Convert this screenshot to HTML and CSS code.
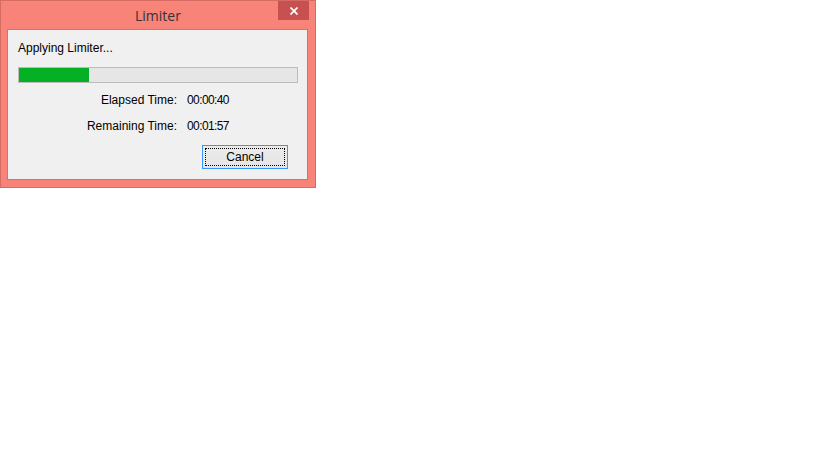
FILE: index.html
```html
<!DOCTYPE html>
<html>
<head>
<meta charset="utf-8">
<link rel="stylesheet" href="styles.css">
</head>
<body>
<div class="window">
  <div class="titlebar">
    <div class="title">Limiter</div>
    <div class="close">
      <svg width="8" height="8" viewBox="0 0 8 8"><path d="M0.5 0.5 L7.5 7.5 M7.5 0.5 L0.5 7.5" stroke="#fff" stroke-width="1.7" fill="none"/></svg>
    </div>
  </div>
  <div class="client">
    <div class="status">Applying Limiter...</div>
    <div class="progress"><div class="fill" style="width:70px"></div></div>
    <div class="times">
      <div class="label">Elapsed Time:</div><div class="value">00:00:40</div>
      <div class="label">Remaining Time:</div><div class="value">00:01:57</div>
    </div>
    <div class="actions">
      <div class="button"><span class="focus">Cancel</span></div>
    </div>
  </div>
</div>
</body>
</html>
```
FILE: styles.css
```css
html, body {
  margin: 0;
  padding: 0;
  background: #ffffff;
}
.window {
  width: 316px;
  height: 188px;
  box-sizing: border-box;
  border: 1px solid #d56b62;
  background: #f88379;
  display: flex;
  flex-direction: column;
}
.titlebar {
  height: 28px;
  display: grid;
  grid-template-columns: 1fr;
}
.title {
  grid-area: 1 / 1;
  justify-self: center;
  align-self: start;
  font-family: "Open Sans", sans-serif;
  font-size: 14px;
  line-height: 20px;
  margin-top: 5px;
  color: #333333;
}
.close {
  grid-area: 1 / 1;
  justify-self: end;
  align-self: start;
  width: 31px;
  height: 19px;
  margin-right: 6px;
  background: #c75050;
  display: flex;
  align-items: center;
  justify-content: center;
}
.close svg { display: block; margin-top: 1px; }
.client {
  margin-left: 6px;
  width: 301px;
  height: 151px;
  box-sizing: border-box;
  border: 1px solid #d97168;
  background: #f0f0f0;
  padding: 11px 0 0 10px;
  font-family: "Liberation Sans", Arial, sans-serif;
  font-size: 12px;
  line-height: 14px;
  color: #000;
}
.status {
  height: 14px;
}
.progress {
  margin-top: 12px;
  width: 280px;
  height: 16px;
  box-sizing: border-box;
  border: 1px solid #bcbcbc;
  background: #e6e6e6;
}
.fill {
  height: 14px;
  background: #06b025;
}
.times {
  margin-top: 10px;
  margin-left: -10px;
  display: grid;
  grid-template-columns: 169px auto;
  column-gap: 10px;
  row-gap: 12px;
}
.label { text-align: right; }
.value { letter-spacing: -0.6px; }
.actions {
  margin-top: 12px;
  display: flex;
  justify-content: flex-end;
  padding-right: 19px;
}
.button {
  width: 86px;
  height: 24px;
  box-sizing: border-box;
  border: 1px solid #3399ff;
  background: linear-gradient(#ececec, #e4e4e4);
  padding: 2px;
  display: flex;
}
.focus {
  flex: 1;
  border: 1px dotted #000;
  display: flex;
  align-items: center;
  justify-content: center;
  font-size: 12px;
}
```
